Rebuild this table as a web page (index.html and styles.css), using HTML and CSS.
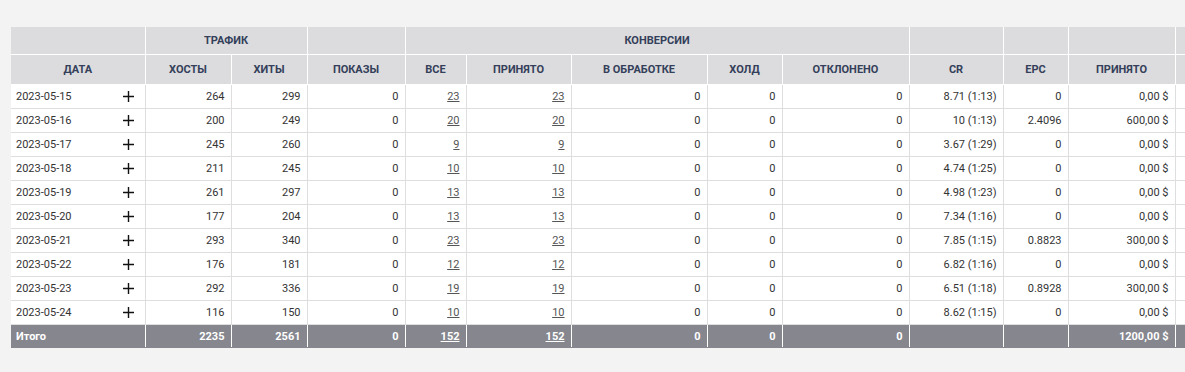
FILE: index.html
```html
<!DOCTYPE html>
<html lang="ru">
<head>
<meta charset="utf-8">
<link rel="stylesheet" href="styles.css">
</head>
<body>
<div class="wrap">
<table class="stats">
<colgroup>
<col class="c-date"><col class="c-hosts"><col class="c-hits"><col class="c-shows"><col class="c-all"><col class="c-acc"><col class="c-proc"><col class="c-hold"><col class="c-rej"><col class="c-cr"><col class="c-epc"><col class="c-money"><col class="c-extra">
</colgroup>
<thead>
<tr class="h1">
<th></th><th colspan="2">Трафик</th><th></th><th colspan="5">Конверсии</th><th></th><th></th><th></th><th></th>
</tr>
<tr class="h2">
<th>Дата</th><th>Хосты</th><th>Хиты</th><th>Показы</th><th>Все</th><th>Принято</th><th>В обработке</th><th>Холд</th><th>Отклонено</th><th>CR</th><th>EPC</th><th>Принято</th><th></th>
</tr>
</thead>
<tbody id="rows"></tbody>
<tfoot>
<tr>
<td class="l">Итого</td><td>2235</td><td>2561</td><td>0</td><td><a href="#">152</a></td><td><a href="#">152</a></td><td>0</td><td>0</td><td>0</td><td></td><td></td><td>1200,00 $</td><td></td>
</tr>
</tfoot>
</table>
</div>
<script>
var data = [
["2023-05-15",264,299,23,"8.71 (1:13)","0","0,00 $"],
["2023-05-16",200,249,20,"10 (1:13)","2.4096","600,00 $"],
["2023-05-17",245,260,9,"3.67 (1:29)","0","0,00 $"],
["2023-05-18",211,245,10,"4.74 (1:25)","0","0,00 $"],
["2023-05-19",261,297,13,"4.98 (1:23)","0","0,00 $"],
["2023-05-20",177,204,13,"7.34 (1:16)","0","0,00 $"],
["2023-05-21",293,340,23,"7.85 (1:15)","0.8823","300,00 $"],
["2023-05-22",176,181,12,"6.82 (1:16)","0","0,00 $"],
["2023-05-23",292,336,19,"6.51 (1:18)","0.8928","300,00 $"],
["2023-05-24",116,150,10,"8.62 (1:15)","0","0,00 $"]
];
var plus = '<svg class="plus" width="11" height="11" viewBox="0 0 11 11"><path d="M5.5 0V11M0 5.5H11" stroke="#111" stroke-width="1.4"/></svg>';
var html = "";
data.forEach(function(r){
  html += '<tr><td class="l"><div class="datecell"><span>'+r[0]+'</span>'+plus+'</div></td>'+
  '<td>'+r[1]+'</td><td>'+r[2]+'</td><td>0</td>'+
  '<td><a href="#">'+r[3]+'</a></td><td><a href="#">'+r[3]+'</a></td>'+
  '<td>0</td><td>0</td><td>0</td><td>'+r[4]+'</td><td>'+r[5]+'</td><td>'+r[6]+'</td><td></td></tr>';
});
document.getElementById("rows").innerHTML = html;
</script>
</body>
</html>
```

FILE: styles.css
```css
html, body {
  margin: 0;
  padding: 0;
  background: #f3f3f3;
  overflow: hidden;
}
.wrap {
  padding: 27px 0 0 11px;
  width: 1300px;
}
.stats {
  border-collapse: collapse;
  table-layout: fixed;
  width: 1244px;
  font-family: Roboto, "Liberation Sans", sans-serif;
  font-size: 11px;
  color: #333;
}
.c-date { width: 134px; }
.c-hosts { width: 86px; }
.c-hits { width: 76px; }
.c-shows { width: 98px; }
.c-all { width: 61px; }
.c-acc { width: 105px; }
.c-proc { width: 136px; }
.c-hold { width: 75px; }
.c-rej { width: 127px; }
.c-cr { width: 94px; }
.c-epc { width: 65px; }
.c-money { width: 107px; }
.c-extra { width: 80px; }
.stats th {
  background: #dcdcde;
  color: #34405a;
  font-weight: 700;
  text-transform: uppercase;
  font-size: 11px;
  border: 1px solid #ffffff;
  padding: 0 5px;
  text-align: center;
}
.stats tr.h1 th { height: 27px; border-top: none; }
.stats tr.h2 th { height: 29px; }
.stats tr.h1 th:first-child, .stats tr.h2 th:first-child { border-left: none; }
.stats td {
  background: #ffffff;
  border: 1px solid #dedede;
  height: 23px;
  padding: 0 6px 0 5px;
  text-align: right;
  white-space: nowrap;
}
.stats td:first-child { border-left: none; }
.stats td.l { text-align: left; }
.datecell {
  display: flex;
  align-items: center;
  justify-content: space-between;
  padding-right: 5px;
}
.plus { display: block; }
.stats a {
  color: #555;
  text-decoration: underline;
}
.stats tfoot td {
  background: #85868e;
  color: #ffffff;
  font-weight: 700;
  border: 1px solid #85868e;
  border-right: 1px solid #ffffff;
  border-left: 1px solid #ffffff;
  height: 22px;
}
.stats tfoot td:first-child { border-left: none; }
.stats tfoot a { color: #ffffff; }
```
